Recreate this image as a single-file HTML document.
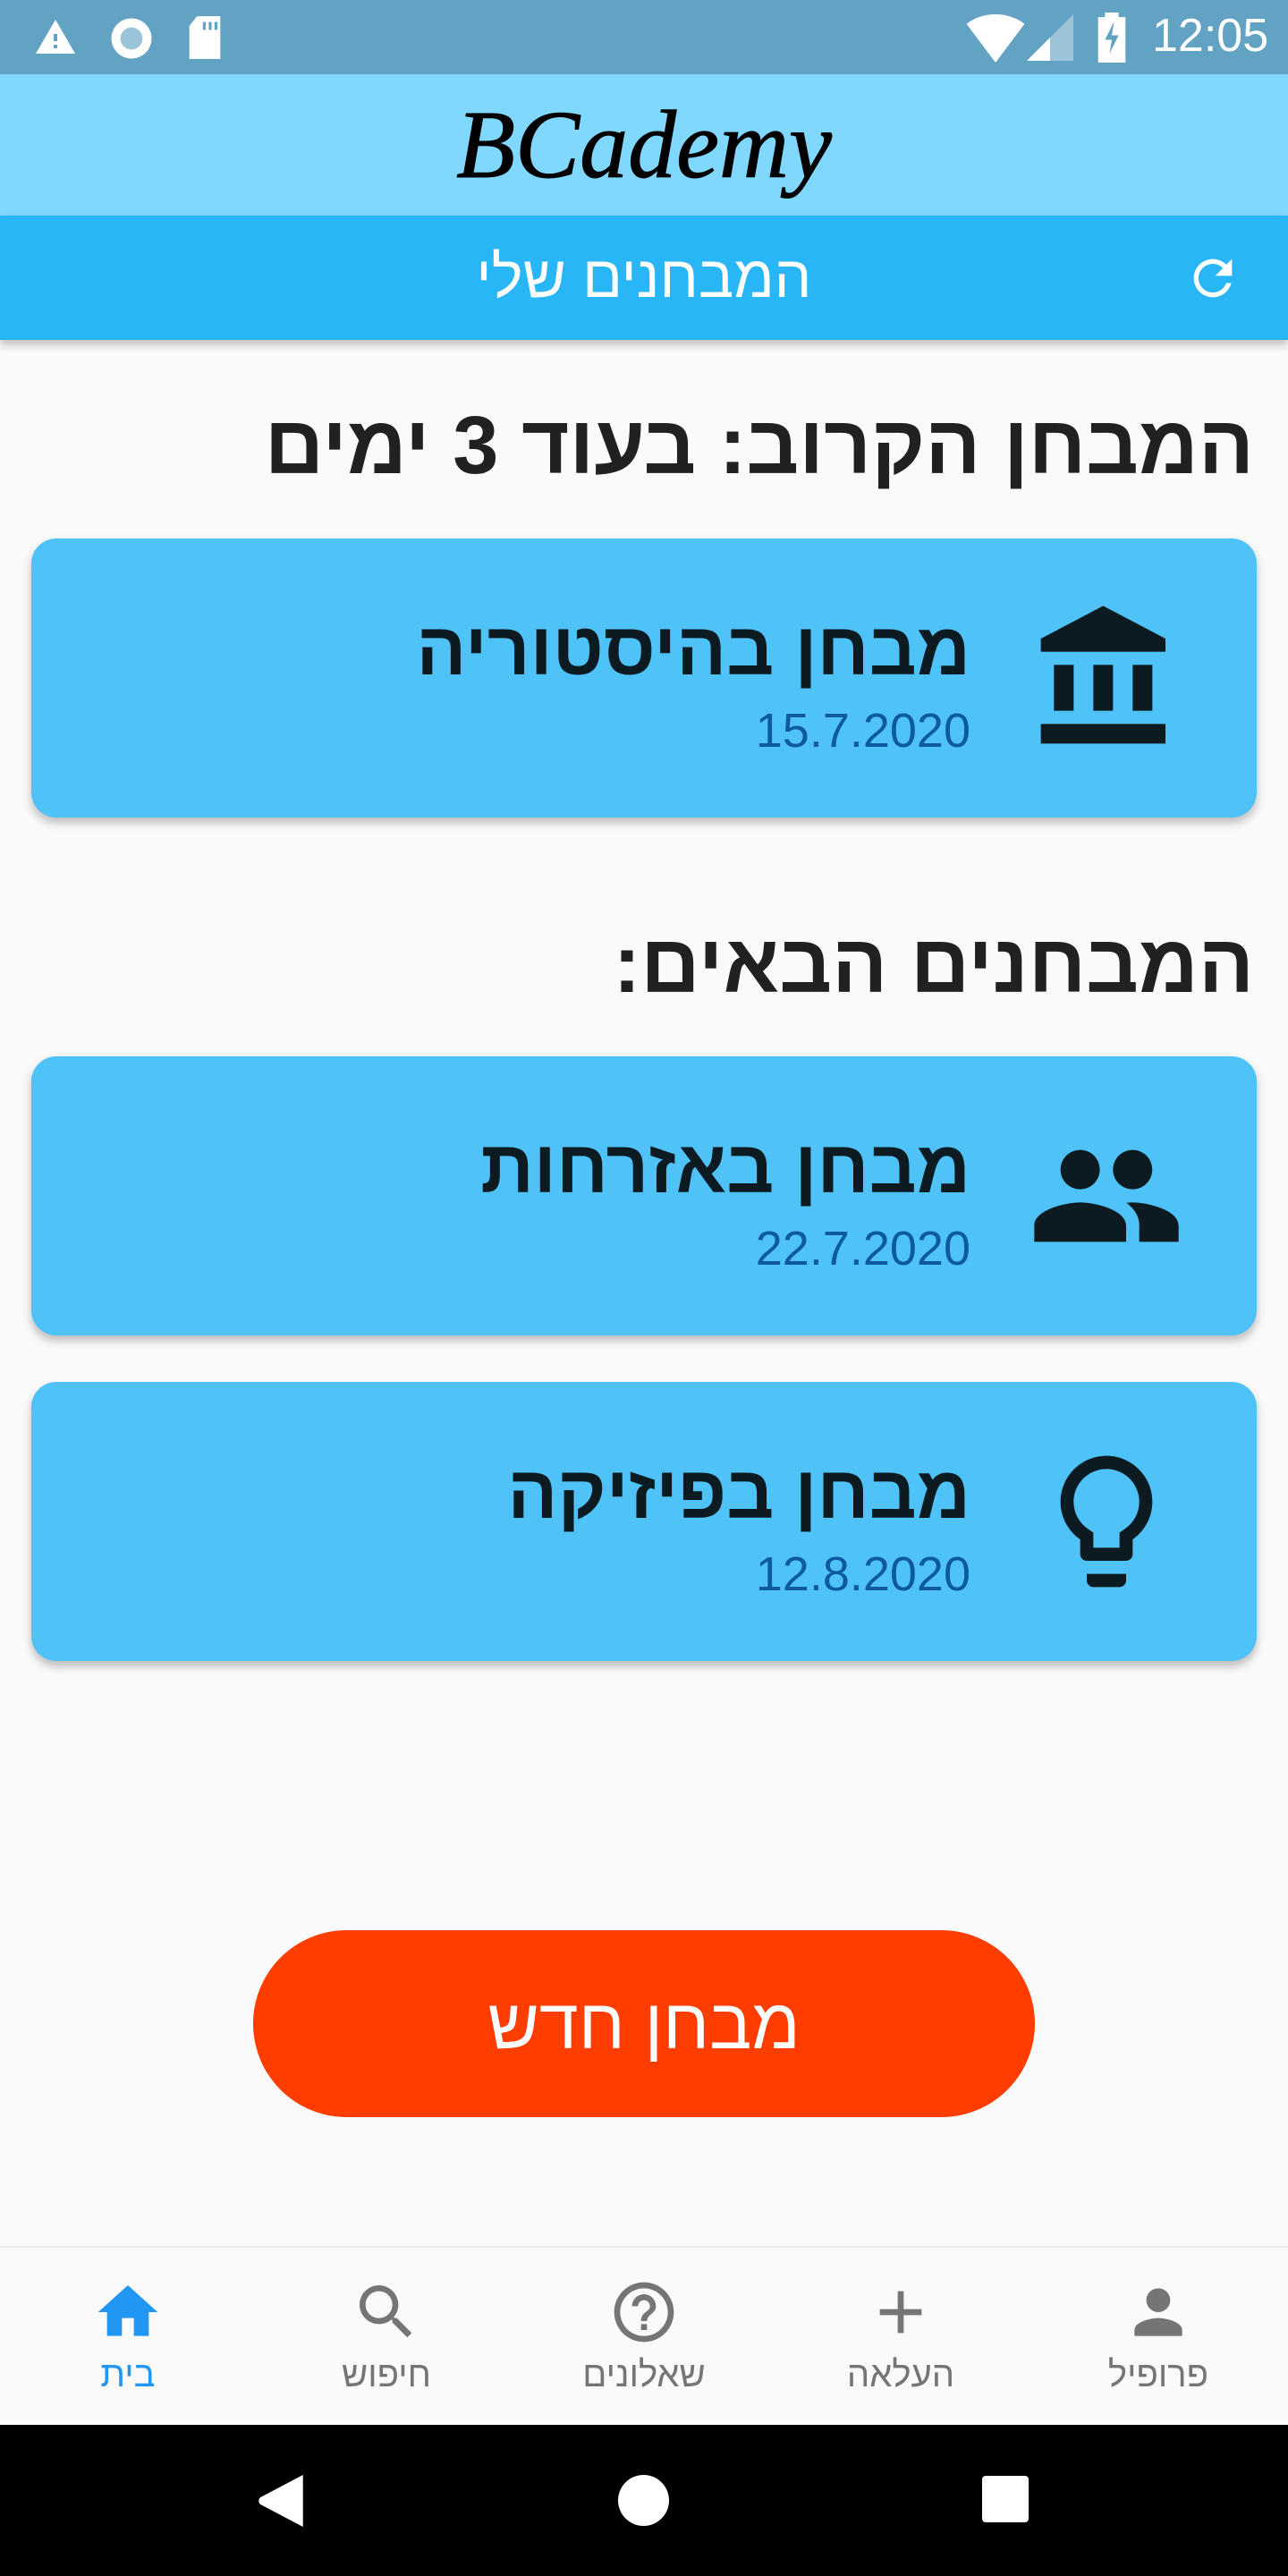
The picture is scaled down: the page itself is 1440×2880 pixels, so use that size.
<!DOCTYPE html>
<html><head><meta charset="utf-8"><style>
*{margin:0;padding:0;box-sizing:border-box}
body{width:1440px;height:2880px;background:#fafafa;position:relative;overflow:hidden;font-family:"Liberation Sans","Noto Sans CJK SC",sans-serif}
.abs{position:absolute}
.status{left:0;top:0;width:1440px;height:83px;background:#62a3c3}
.logo{left:0;top:83px;width:1440px;height:158px;background:#80d8ff}
.tbar{left:0;top:241px;width:1440px;height:139px;background:#29b6f6;box-shadow:0 5px 10px rgba(0,0,0,.25)}
.h{right:38px;font-size:92px;font-weight:bold;color:#212121;direction:rtl;white-space:nowrap}
.card{left:35px;width:1370px;height:312px;background:#4fc3f7;border-radius:28px;box-shadow:0 6px 10px rgba(0,0,0,.25)}
.ct{position:absolute;right:320px;top:82px;font-size:83px;font-weight:bold;color:#0c1a22;direction:rtl;white-space:nowrap;line-height:1}
.cd{position:absolute;right:320px;top:188px;font-size:54px;color:#0e5aa0;line-height:1}
.ic{position:absolute;right:80px;top:68px;width:176px;height:176px}
.nav{top:2511px;left:0;width:1440px;height:200px;background:#fafafa;border-top:2px solid #eee}
.ni{position:absolute;top:32px;width:200px;margin-left:-100px;text-align:center;color:#757575;font-size:40px}
.ni svg{width:80px;height:80px;display:block;margin:0 auto 8px}
</style></head><body>
<div class="abs status">
<svg class="abs" style="left:34px;top:18px" width="56" height="48" viewBox="0 0 24 24"><path fill="#fff" d="M1 21h22L12 2 1 21zm12-3h-2v-2h2v2zm0-4h-2v-4h2v4z"/></svg>
<svg class="abs" style="left:120px;top:16px" width="54" height="54" viewBox="0 0 24 24"><circle cx="12" cy="12" r="10" fill="#fff"/><circle cx="12" cy="12" r="5.5" fill="#9cc4d8"/></svg>
<svg class="abs" style="left:206px;top:16px" width="46" height="52" viewBox="0 0 20 24"><path fill="#fff" d="M6 1h12v22H2V6z"/><path fill="#62a3c3" d="M9 4h1.5v4H9zM12 4h1.5v4H12zM15 4h1.5v4H15z"/></svg>
<svg class="abs" style="left:1080px;top:16px" width="66" height="54" viewBox="0 0 24 20"><path fill="#fff" d="M12 20L0 4C3 1.5 7.5 0 12 0s9 1.5 12 4z"/></svg>
<svg class="abs" style="left:1148px;top:16px" width="52" height="52" viewBox="0 0 24 24"><path fill="#9cc4d8" d="M24 0v24H0z"/><path fill="#fff" d="M12 12v12H0z"/></svg>
<svg class="abs" style="left:1226px;top:14px" width="34" height="56" viewBox="0 0 12 22"><path fill="#fff" d="M3 0h6v2h3v20H0V2h3z"/><path fill="#62a3c3" d="M7 4L3 12h3l-1 6 4-8H6z"/></svg>
<div class="abs" style="left:1288px;top:10px;font-size:52px;color:#fff">12:05</div>
</div>
<div class="abs logo"><div class="abs" style="left:0;width:1440px;top:18px;text-align:center;font-family:'Liberation Serif',serif;font-style:italic;font-size:108px;color:#000;-webkit-text-stroke:1px #000">BCademy</div></div>
<div class="abs tbar">
<div class="abs" style="left:0;width:1440px;top:30px;text-align:center;color:#fff;font-size:66px;direction:rtl">המבחנים שלי</div>
<svg class="abs" style="left:1324px;top:38px" width="64" height="64" viewBox="0 0 24 24"><path fill="#fff" d="M17.65 6.35C16.2 4.9 14.21 4 12 4c-4.42 0-7.99 3.58-7.990 8s3.57 8 7.99 8c3.73 0 6.84-2.55 7.73-6h-2.08c-.82 2.33-3.04 4-5.65 4-3.31 0-6-2.69-6-6s2.69-6 6-6c1.66 0 3.14.69 4.22 1.78L13 11h7V4l-2.35 2.35z"/></svg>
</div>
<div class="abs h" style="top:446px">המבחן הקרוב: בעוד 3 ימים</div>
<div class="abs card" style="top:602px">
<div class="ct">מבחן בהיסטוריה</div><div class="cd">15.7.2020</div>
<svg class="ic" viewBox="0 0 24 24"><path fill="#0c1a22" d="M4 10v7h3v-7H4zm6 0v7h3v-7h-3zM2 22h19v-3H2v3zm14-12v7h3v-7h-3zm-4.5-9L2 6v2h19V6l-9.5-5z"/></svg>
</div>
<div class="abs h" style="top:1026px">המבחנים הבאים:</div>
<div class="abs card" style="top:1181px">
<div class="ct">מבחן באזרחות</div><div class="cd">22.7.2020</div>
<svg class="ic" viewBox="0 0 24 24"><path fill="#0c1a22" d="M16 11c1.66 0 2.99-1.34 2.99-3S17.66 5 16 5c-1.66 0-3 1.34-3 3s1.34 3 3 3zm-8 0c1.66 0 2.99-1.34 2.99-3S9.66 5 8 5C6.34 5 5 6.34 5 8s1.34 3 3 3zm0 2c-2.33 0-7 1.17-7 3.5V19h14v-2.5c0-2.33-4.67-3.5-7-3.5zm8 0c-.29 0-.62.02-.97.05 1.16.84 1.97 1.97 1.97 3.45V19h6v-2.5c0-2.33-4.67-3.5-7-3.5z"/></svg>
</div>
<div class="abs card" style="top:1545px">
<div class="ct">מבחן בפיזיקה</div><div class="cd">12.8.2020</div>
<svg class="ic" viewBox="0 0 24 24"><path fill="#0c1a22" d="M9 21c0 .55.45 1 1 1h4c.55 0 1-.45 1-1v-1H9v1zm3-19C8.14 2 5 5.14 5 9c0 2.38 1.19 4.47 3 5.74V17c0 .55.45 1 1 1h6c.55 0 1-.45 1-1v-2.26c1.81-1.27 3-3.36 3-5.74 0-3.86-3.14-7-7-7zm2.85 11.1l-.85.6V16h-4v-2.3l-.85-.6C7.8 12.16 7 10.63 7 9c0-2.76 2.24-5 5-5s5 2.24 5 5c0 1.63-.8 3.16-2.15 4.1z"/></svg>
</div>
<div class="abs" style="left:283px;top:2158px;width:874px;height:209px;border-radius:105px;background:#ff3d00;color:#fff;font-size:79px;text-align:center;line-height:209px;direction:rtl">מבחן חדש</div>
<div class="abs nav">
<div class="ni" style="left:143px;color:#2196f3"><svg viewBox="0 0 24 24"><path fill="#2196f3" d="M10 20v-6h4v6h5v-8h3L12 3 2 12h3v8z"/></svg>בית</div>
<div class="ni" style="left:432px"><svg viewBox="0 0 24 24"><path fill="#757575" d="M15.5 14h-.79l-.28-.27C15.41 12.59 16 11.11 16 9.5 16 5.91 13.09 3 9.5 3S3 5.91 3 9.5 5.91 16 9.5 16c1.61 0 3.09-.59 4.23-1.57l.27.28v.79l5 4.99L20.49 19l-4.99-5zm-6 0C7.01 14 5 11.99 5 9.5S7.01 5 9.5 5 14 7.01 14 9.5 11.99 14 9.5 14z"/></svg>חיפוש</div>
<div class="ni" style="left:720px"><svg viewBox="0 0 24 24"><path fill="#757575" d="M11 18h2v-2h-2v2zm1-16C6.48 2 2 6.48 2 12s4.48 10 10 10 10-4.48 10-10S17.52 2 12 2zm0 18c-4.41 0-8-3.59-8-8s3.59-8 8-8 8 3.59 8 8-3.59 8-8 8zm0-14c-2.21 0-4 1.790-4 4h2c0-1.1.9-2 2-2s2 .9 2 2c0 2-3 1.75-3 5h2c0-2.25 3-2.5 3-5 0-2.21-1.79-4-4-4z"/></svg>שאלונים</div>
<div class="ni" style="left:1007px"><svg viewBox="0 0 24 24"><path fill="#757575" d="M19 13h-6v6h-2v-6H5v-2h6V5h2v6h6v2z"/></svg>העלאה</div>
<div class="ni" style="left:1295px"><svg viewBox="0 0 24 24"><path fill="#757575" d="M12 12c2.21 0 4-1.79 4-4s-1.79-4-4-4-4 1.79-4 4 1.79 4 4 4zm0 2c-2.67 0-8 1.34-8 4v2h16v-2c0-2.66-5.33-4-8-4z"/></svg>פרופיל</div>
</div>
<div class="abs" style="left:0;top:2711px;width:1440px;height:169px;background:#000">
<svg class="abs" style="left:288px;top:56px" width="54" height="58" viewBox="0 0 20 22"><path fill="#fff" d="M19 0v22L1 12.5c-1-.6-1-2.4 0-3z"/></svg>
<div class="abs" style="left:691px;top:56px;width:57px;height:57px;border-radius:50%;background:#fff"></div>
<div class="abs" style="left:1098px;top:57px;width:52px;height:52px;border-radius:4px;background:#fff"></div>
</div>
</body></html>
